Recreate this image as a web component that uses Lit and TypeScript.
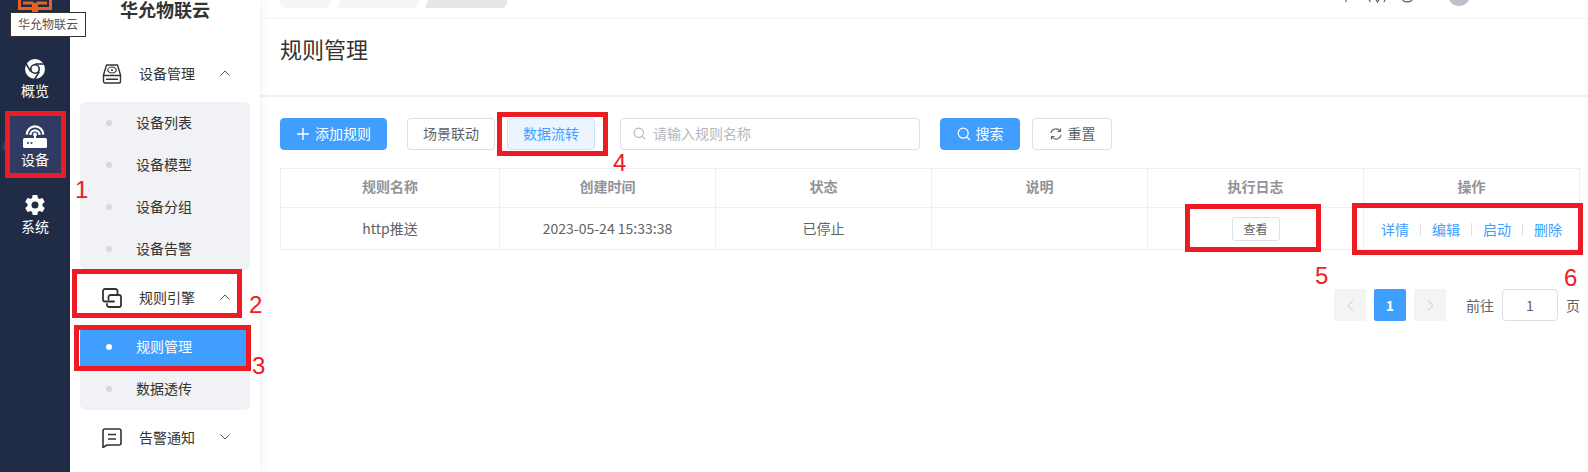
import { LitElement, html, css, svg } from "lit";
import { customElement } from "lit/decorators.js";
import { classMap } from "lit/directives/class-map.js";
import { styleMap } from "lit/directives/style-map.js";

const chrome = svg`<circle cx="12" cy="12" r="10" fill="#fff"/><circle cx="12" cy="12" r="5" fill="#202c46"/><circle cx="12" cy="12" r="3.400" fill="#fff"/><path d="M12 7h9.500M7.700 14.500 3 6.500M16.300 14.500 11.500 22.500" stroke="#202c46" stroke-width="1.500" fill="none"/>`;
const router = svg`<path d="M3.800 10.500a8.200 8.200 0 0 1 16.400 0M7.400 11a4.600 4.600 0 0 1 9.200 0" stroke="#fff" stroke-width="2.300" fill="none"/><circle cx="12" cy="10.500" r="2" fill="#fff"/><path d="M11 11h2v4h-2z" fill="#fff"/><rect x="0" y="14" width="24" height="10" rx="1.500" fill="#fff"/><circle cx="5" cy="19" r="1" fill="#2f3b62"/><circle cx="8.500" cy="19" r="1" fill="#2f3b62"/>`;
const gear = svg`<path fill="#fff" d="M12 15.500A3.500 3.500 0 0 1 8.500 12 3.500 3.500 0 0 1 12 8.500a3.500 3.500 0 0 1 3.500 3.500 3.500 3.500 0 0 1-3.500 3.500m7.430-2.530c.04-.32.07-.64.07-.97 0-.33-.03-.66-.07-1l2.110-1.630c.19-.15.24-.42.12-.64l-2-3.460c-.12-.22-.39-.31-.61-.22l-2.490 1c-.52-.39-1.060-.73-1.690-.98l-.37-2.650A.506.506 0 0 0 14 2h-4c-.25 0-.46.18-.5.42l-.37 2.650c-.63.25-1.170.59-1.690.98l-2.490-1c-.22-.09-.49 0-.61.22l-2 3.460c-.13.22-.07.49.12.64L4.570 11c-.04.34-.07.67-.07 1 0 .33.03.65.07.97l-2.110 1.660c-.19.15-.25.42-.12.64l2 3.460c.12.22.39.3.61.22l2.490-1.010c.52.4 1.060.74 1.690.99l.37 2.650c.04.24.25.42.5.42h4c.25 0 .46-.18.5-.42l.37-2.650c.63-.26 1.170-.59 1.690-.99l2.490 1.010c.22.08.49 0 .61-.22l2-3.460c.12-.22.07-.49-.12-.64l-2.110-1.660Z"/>`;
const disk = svg`<path d="M4.500 1h11l3 10v6.500a1.500 1.500 0 0 1-1.500 1.500H3a1.500 1.500 0 0 1-1.500-1.500V11z" fill="none" stroke="#333" stroke-width="1.400" stroke-linejoin="round"/><path d="M1.500 11.500h17M4 15.300h12" stroke="#333" stroke-width="1.400"/><ellipse cx="10" cy="6" rx="4.200" ry="3" fill="none" stroke="#333" stroke-width="1.200"/><circle cx="10" cy="6" r="1" fill="#333"/>`;
const link = svg`<path d="M15.500 6.500V3a2 2 0 0 0-2-2H3a2 2 0 0 0-2 2v8.500a2 2 0 0 0 2 2h9" fill="none" stroke="#333" stroke-width="1.800" stroke-linecap="round"/><path d="M6.500 11.500V9a2 2 0 0 1 2-2H17a2 2 0 0 1 2 2v8a2 2 0 0 1-2 2H7a2 2 0 0 1-2-2v-1" fill="none" stroke="#333" stroke-width="1.800" stroke-linecap="round"/>`;
const message = svg`<path d="M1 3A2 2 0 0 1 3 1h14a2 2 0 0 1 2 2v12a2 2 0 0 1-2 2H5l-4 2.500z" fill="none" stroke="#333" stroke-width="1.600" stroke-linejoin="round"/><path d="M6 6.500h8M6 11h8" stroke="#333" stroke-width="1.600"/>`;

const MENUS = [
  { name: "设备管理", icon: disk, open: true, items: ["设备列表", "设备模型", "设备分组", "设备告警"] },
  { name: "规则引擎", icon: link, open: true, items: ["规则管理", "数据透传"] },
  { name: "告警通知", icon: message, open: false, items: [] as string[] },
];

const COLUMNS = ["规则名称", "创建时间", "状态", "说明", "执行日志", "操作"];

// red marks drawn over the screenshot
const BOXES = [
  { left: 5, top: 111, width: 61, height: 67 },
  { left: 72, top: 269, width: 170, height: 49 },
  { left: 74, top: 325, width: 177, height: 46 },
  { left: 497, top: 112, width: 111, height: 44 },
  { left: 1185, top: 204, width: 136, height: 48 },
  { left: 1352, top: 203, width: 231, height: 52 },
];
const NUMBERS = [
  { text: "1", left: 75, top: 177 },
  { text: "2", left: 249, top: 292 },
  { text: "3", left: 252, top: 353 },
  { text: "4", left: 613, top: 150 },
  { text: "5", left: 1315, top: 263 },
  { text: "6", left: 1564, top: 265 },
];

@customElement("app-root")
export class AppRoot extends LitElement {
  static styles = css`
    :host {
      display: block;
      position: relative;
      width: 1588px;
      height: 472px;
      overflow: hidden;
      background: #fff;
      font-family: "Noto Sans CJK SC", "Liberation Sans", sans-serif;
      font-size: 14px;
      color: #606266;
    }
    .layout {
      display: flex;
      height: 472px;
    }
    .rail {
      flex: none;
      width: 70px;
      background: #202c46;
      display: flex;
      flex-direction: column;
      align-items: center;
      gap: 11px;
      padding-top: 48px;
      box-sizing: border-box;
      position: relative;
    }
    .logo {
      position: absolute;
      top: 0;
      left: 18px;
    }
    .tooltip {
      position: absolute;
      left: 10px;
      top: 12px;
      width: 76px;
      height: 25px;
      box-sizing: border-box;
      border: 1px solid #333;
      background: #fff;
      color: #555;
      font-size: 12px;
      line-height: 22px;
      text-align: center;
      z-index: 3;
    }
    .handle {
      position: absolute;
      left: 2px;
      top: 141px;
      width: 11px;
      height: 11px;
      border-radius: 50%;
      background: #2f3b62;
    }
    .tile {
      width: 51px;
      height: 57px;
      display: flex;
      flex-direction: column;
      align-items: center;
      color: #fff;
      box-sizing: border-box;
      padding-top: 9px;
      border-radius: 2px;
    }
    .tile.active {
      background: #2f3b62;
      padding-top: 8px;
    }
    .tile svg {
      width: 24px;
      height: 24px;
    }
    .tile span {
      line-height: 20px;
      margin-top: -1px;
    }
    .tile.active span {
      margin-top: 1px;
    }
    .sidebar {
      flex: none;
      width: 190px;
      box-sizing: border-box;
      padding: 0 10px;
      background: #fff;
      box-shadow: 2px 0 8px rgba(0, 0, 0, 0.05);
      position: relative;
    }
    .brand {
      height: 46px;
      line-height: 18px;
      font-size: 18px;
      font-weight: 700;
      color: #333;
      text-align: center;
    }
    .head {
      height: 56px;
      display: flex;
      align-items: center;
      padding: 0 20px 0 22px;
      color: #333;
    }
    .head svg.menu-icon {
      width: 20px;
      height: 20px;
      margin-right: 17px;
    }
    .head span {
      margin-top: -3px;
    }
    .head svg.chev {
      width: 10px;
      height: 6px;
      margin-left: auto;
      margin-top: -3px;
    }
    .sub {
      background: #f1f2f5;
      border-radius: 6px;
      overflow: hidden;
    }
    .sub-item {
      height: 42px;
      display: flex;
      align-items: center;
      padding-left: 26px;
      gap: 24px;
      color: #333;
    }
    .sub-item .text {
      margin-top: -2px;
    }
    .dot {
      width: 6px;
      height: 6px;
      border-radius: 50%;
      background: #d6d8e2;
    }
    .sub-item.active {
      background: #409eff;
      color: #fff;
    }
    .sub-item.active .dot {
      background: #fff;
    }
    .main {
      flex: 1;
      min-width: 0;
    }
    .topbar {
      height: 19px;
      box-sizing: border-box;
      border-bottom: 1px solid #f2f2f2;
      display: flex;
      padding-left: 20px;
      gap: 5px;
      position: relative;
    }
    .crumb {
      height: 8px;
      background: #f4f5f7;
    }
    .crumb.first {
      width: 52px;
      border-radius: 0 0 0 5px;
      clip-path: polygon(0 0, 100% 0, calc(100% - 4px) 100%, 0 100%);
    }
    .crumb.mid {
      width: 83px;
      clip-path: polygon(3px 0, 100% 0, calc(100% - 4px) 100%, 0 100%);
    }
    .crumb.last {
      width: 82px;
      background: #e4e6ea;
      border-radius: 0 0 6px 0;
      clip-path: polygon(3px 0, 100% 0, 100% 100%, 0 100%);
    }
    .avatar {
      position: absolute;
      left: 1188px;
      top: -16px;
      width: 22px;
      height: 22px;
      border-radius: 50%;
      background: #bcc1cc;
    }
    .top-icons {
      position: absolute;
      left: 1085px;
      top: 0;
    }
    .title {
      height: 78px;
      box-sizing: border-box;
      border-bottom: 2px solid #f0f1f3;
      padding: 14px 0 0 20px;
      font-size: 22px;
      line-height: 30px;
      color: #333;
    }
    .content {
      padding: 21px 8px 0 20px;
    }
    .toolbar {
      display: flex;
      height: 32px;
    }
    .btn {
      height: 32px;
      box-sizing: border-box;
      border: 1px solid #dcdfe6;
      border-radius: 4px;
      background: #fff;
      color: #606266;
      display: flex;
      align-items: center;
      justify-content: center;
      gap: 5px;
      font-size: 14px;
      padding-bottom: 3px;
    }
    .btn svg {
      width: 14px;
      height: 14px;
      margin-top: 2px;
    }
    .btn.primary {
      background: #409eff;
      border-color: #409eff;
      color: #fff;
    }
    .btn.picked {
      background: #ecf5ff;
      border-color: #c6e2ff;
      color: #409eff;
    }
    .add {
      width: 107px;
      margin-right: 20px;
    }
    .tab {
      width: 88px;
      margin-right: 12px;
    }
    .search {
      width: 300px;
      height: 32px;
      box-sizing: border-box;
      border: 1px solid #dcdfe6;
      border-radius: 4px;
      margin: 0 20px 0 13px;
      padding: 0 0 3px 12px;
      display: flex;
      align-items: center;
      gap: 7px;
      color: #b4b7bd;
    }
    .search svg {
      width: 13px;
      height: 13px;
      margin-top: 2px;
    }
    .query {
      width: 80px;
      margin-right: 12px;
    }
    .table {
      margin-top: 18px;
      width: 1300px;
      display: grid;
      grid-template-columns: 219px repeat(5, 216px);
      border-top: 1px solid #ebeef5;
      border-left: 1px solid #ebeef5;
      box-sizing: border-box;
    }
    .cell {
      border-right: 1px solid #ebeef5;
      border-bottom: 1px solid #ebeef5;
      display: flex;
      align-items: center;
      justify-content: center;
      box-sizing: border-box;
    }
    .cell.th {
      height: 39px;
      font-weight: 700;
      color: #909399;
      padding-bottom: 4px;
    }
    .cell.data {
      height: 42px;
    }
    .cell.plain {
      padding-bottom: 2px;
    }
    .view {
      width: 48px;
      height: 24px;
      box-sizing: border-box;
      border: 1px solid #dcdfe6;
      border-radius: 3px;
      font-size: 12px;
      display: flex;
      align-items: center;
      justify-content: center;
    }
    .actions {
      display: flex;
      align-items: center;
      color: #409eff;
      padding-top: 1px;
    }
    .actions i {
      width: 1px;
      height: 13px;
      background: #dcdfe6;
      margin: 0 11px;
    }
    .pager {
      display: flex;
      justify-content: flex-end;
      align-items: center;
      margin-top: 39px;
    }
    .page {
      width: 32px;
      height: 32px;
      background: #f4f4f5;
      border-radius: 2px;
      margin-right: 8px;
      display: flex;
      align-items: center;
      justify-content: center;
    }
    .page svg {
      width: 7px;
      height: 11px;
    }
    .page.current {
      background: #409eff;
      color: #fff;
      font-weight: 700;
    }
    .jump {
      margin-left: 12px;
    }
    .jump-input {
      width: 56px;
      height: 32px;
      box-sizing: border-box;
      border: 1px solid #dcdfe6;
      border-radius: 4px;
      margin: 0 8px;
      display: flex;
      align-items: center;
      justify-content: center;
    }
    .mark {
      position: absolute;
      box-sizing: border-box;
      border: 5px solid #ed1c24;
      z-index: 4;
    }
    .num {
      position: absolute;
      color: #ed1c24;
      font-family: "Liberation Sans", sans-serif;
      font-size: 24px;
      line-height: 26px;
      z-index: 4;
    }
  `;

  private _chevron(open: boolean) {
    return html`<svg class="chev" viewBox="0 0 10 6">
      <path d=${open ? "M.5 5.500 5 1l4.500 4.500" : "M.5.5 5 5 9.500.5"} fill="none" stroke="#555" stroke-width="1" />
    </svg>`;
  }

  private _renderRail() {
    return html`<div class="rail">
      <svg class="logo" width="34" height="12" viewBox="0 0 34 12">
        <path d="M1.500 0v8.500h12.500M5 3h10.500M15.500 3v9M18.500 3v9M32.500 0v8.500H20M29 3H18.500" fill="none" stroke="#e8611e" stroke-width="3" />
      </svg>
      <div class="tooltip">华允物联云</div>
      <div class="handle"></div>
      <div class="tile"><svg viewBox="0 0 24 24">${chrome}</svg><span>概览</span></div>
      <div class="tile active"><svg viewBox="0 0 24 24">${router}</svg><span>设备</span></div>
      <div class="tile"><svg viewBox="0 0 24 24">${gear}</svg><span>系统</span></div>
    </div>`;
  }

  private _renderSidebar() {
    return html`<div class="sidebar">
      <div class="brand">华允物联云</div>
      ${MENUS.map(
        (menu) => html`
          <div class="head">
            <svg class="menu-icon" viewBox="0 0 20 20">${menu.icon}</svg>
            <span>${menu.name}</span>
            ${this._chevron(menu.open)}
          </div>
          ${menu.items.length
            ? html`<div class="sub">
                ${menu.items.map(
                  (item) => html`<div class=${classMap({ "sub-item": true, active: item === "规则管理" })}>
                    <span class="dot"></span><span class="text">${item}</span>
                  </div>`
                )}
              </div>`
            : ""}
        `
      )}
    </div>`;
  }

  private _renderToolbar() {
    const glass = (color: string) => html`<svg viewBox="0 0 14 14">
      <circle cx="6.200" cy="6.200" r="5" fill="none" stroke=${color} stroke-width="1.200" />
      <path d="m10 10 3 3" stroke=${color} stroke-width="1.200" />
    </svg>`;
    return html`<div class="toolbar">
      <div class="btn primary add">
        <svg viewBox="0 0 14 14"><path d="M7 1v12M1 7h12" stroke="#fff" stroke-width="1.400" /></svg>添加规则
      </div>
      <div class="btn tab">场景联动</div>
      <div class="btn tab picked">数据流转</div>
      <div class="search">${glass("#b4b7bd")}<span>请输入规则名称</span></div>
      <div class="btn primary query">${glass("#fff")}搜索</div>
      <div class="btn query">
        <svg viewBox="0 0 14 14">
          <path d="M2 6a5 5 0 0 1 9-2M12 8a5 5 0 0 1-9 2M11.500 1.500V4.500H8.500M2.500 12.500V9.500h3" fill="none" stroke="#606266" stroke-width="1.100" />
        </svg>重置
      </div>
    </div>`;
  }

  private _renderTable() {
    return html`<div class="table">
      ${COLUMNS.map((c) => html`<div class="cell th">${c}</div>`)}
      <div class="cell data plain">http推送</div>
      <div class="cell data plain">2023-05-24 15:33:38</div>
      <div class="cell data plain">已停止</div>
      <div class="cell data"></div>
      <div class="cell data"><div class="view">查看</div></div>
      <div class="cell data">
        <div class="actions">
          <span>详情</span><i></i><span>编辑</span><i></i><span>启动</span><i></i><span>删除</span>
        </div>
      </div>
    </div>`;
  }

  private _renderPager() {
    return html`<div class="pager">
      <div class="page"><svg viewBox="0 0 7 11"><path d="M6 .5 1 5.500l5 5" fill="none" stroke="#c0c4cc" /></svg></div>
      <div class="page current">1</div>
      <div class="page"><svg viewBox="0 0 7 11"><path d="m1 .5 5 5-5 5" fill="none" stroke="#c0c4cc" /></svg></div>
      <span class="jump">前往</span>
      <div class="jump-input">1</div>
      <span>页</span>
    </div>`;
  }

  render() {
    return html`
      <div class="layout">
        ${this._renderRail()} ${this._renderSidebar()}
        <div class="main">
          <div class="topbar">
            <div class="crumb first"></div>
            <div class="crumb mid"></div>
            <div class="crumb last"></div>
            <svg class="top-icons" width="72" height="3" viewBox="0 0 72 3">
              <path d="M1 0v2M24 0l1.500 2M31 0l1.500 2 1.500-2M40 0l-1 2M58 0c0 2 5 2.500 8 1 1-.5 1-1 1-1" fill="none" stroke="#555" stroke-width="1.100" />
            </svg>
            <div class="avatar"></div>
          </div>
          <div class="title">规则管理</div>
          <div class="content">
            ${this._renderToolbar()} ${this._renderTable()} ${this._renderPager()}
          </div>
        </div>
      </div>
      ${BOXES.map(
        (b) => html`<div
          class="mark"
          style=${styleMap({ left: `${b.left}px`, top: `${b.top}px`, width: `${b.width}px`, height: `${b.height}px` })}
        ></div>`
      )}
      ${NUMBERS.map(
        (n) => html`<div class="num" style=${styleMap({ left: `${n.left}px`, top: `${n.top}px` })}>${n.text}</div>`
      )}
    `;
  }
}
